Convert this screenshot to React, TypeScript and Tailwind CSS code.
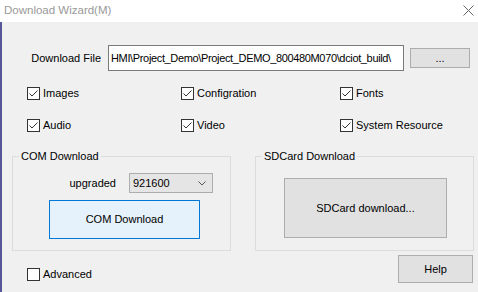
import type { ReactNode } from "react";

const Check = ({ checked, label }: { checked?: boolean; label: string }) => (
  <div className="flex items-center h-[13px]">
    <div className="w-[13px] h-[13px] border border-[#333333] bg-white shrink-0">
      {checked && (
        <svg width="11" height="11" viewBox="0 0 11 11">
          <polyline points="1.5,5.5 4,8 9.5,2.5" fill="none" stroke="#333333" strokeWidth="1" />
        </svg>
      )}
    </div>
    <span className="ml-[3px] text-black leading-none">{label}</span>
  </div>
);

const Group = ({ title, children }: { title: string; children: ReactNode }) => (
  <fieldset className="m-0 p-0 w-[219px] h-[102px] border border-[#dcdcdc]">
    <legend className="ml-[6px] px-[2px] h-[14px] leading-[14px] text-black">{title}</legend>
    {children}
  </fieldset>
);

export default function App() {
  return (
    <div
      className="w-[478px] h-[292px] bg-[#f0f0f0] flex flex-col overflow-hidden text-[11px]"
      style={{ fontFamily: '"Liberation Sans", Arial, sans-serif' }}
    >
      <div className="h-[22px] bg-white flex items-center justify-between pl-[4px] pr-[4px] shrink-0">
        <span className="text-[11.5px] text-[#999999]">Download Wizard(M)</span>
        <svg width="11" height="11" viewBox="0 0 11 11" className="mb-[1px]">
          <path d="M0.5 0.5 L10.5 10.5 M10.5 0.5 L0.5 10.5" stroke="#666666" strokeWidth="1" />
        </svg>
      </div>

      <div className="flex-1 flex flex-col border-l-2 border-[#55579a]">
        <div className="flex items-center mt-[23px]">
          <div className="w-[99px] text-right text-black">Download File</div>
          <div className="ml-[7px] w-[296px] h-[26px] bg-white border border-[#7a7a7a] flex items-center overflow-hidden whitespace-nowrap pl-[2px]">
            <span className="text-black tracking-[-0.35px]">
              HMI\Project_Demo\Project_DEMO_800480M070\dciot_build\
            </span>
          </div>
          <button className="ml-[6px] w-[60px] h-[20px] bg-[#e1e1e1] border border-[#adadad] text-black leading-none">
            ...
          </button>
        </div>

        <div className="grid grid-cols-[154px_159px_auto] ml-[25px] mt-[16px] gap-y-[19px]">
          <Check checked label="Images" />
          <Check checked label="Configration" />
          <Check checked label="Fonts" />
          <Check checked label="Audio" />
          <Check checked label="Video" />
          <Check checked label="System Resource" />
        </div>

        <div className="flex ml-[10px] mt-[17px] gap-[24px]">
          <Group title="COM Download">
            <div className="flex items-center mt-[10px]">
              <div className="w-[103px] text-right text-black">upgraded</div>
              <div className="ml-[13px] w-[84px] h-[20px] bg-[#e5e5e5] border border-[#adadad] flex items-center justify-between pl-[3px] pr-[6px]">
                <span className="text-black">921600</span>
                <svg width="8" height="5" viewBox="0 0 8 5">
                  <polyline points="0.5,0.5 4,4 7.5,0.5" fill="none" stroke="#555555" strokeWidth="1" />
                </svg>
              </div>
            </div>
            <button className="ml-[36px] mt-[7px] w-[151px] h-[39px] bg-[#e5f1fb] border border-[#0078d7] text-black">
              COM Download
            </button>
          </Group>
          <Group title="SDCard Download">
            <button className="ml-[28px] mt-[15px] w-[163px] h-[60px] bg-[#e1e1e1] border border-[#adadad] text-black">
              SDCard download...
            </button>
          </Group>
        </div>

        <div className="flex justify-between items-start ml-[25px] mr-[5px] mt-[4px]">
          <div className="mt-[13px]">
            <Check label="Advanced" />
          </div>
          <button className="w-[75px] h-[28px] bg-[#e1e1e1] border border-[#adadad] text-black">Help</button>
        </div>
      </div>
    </div>
  );
}
